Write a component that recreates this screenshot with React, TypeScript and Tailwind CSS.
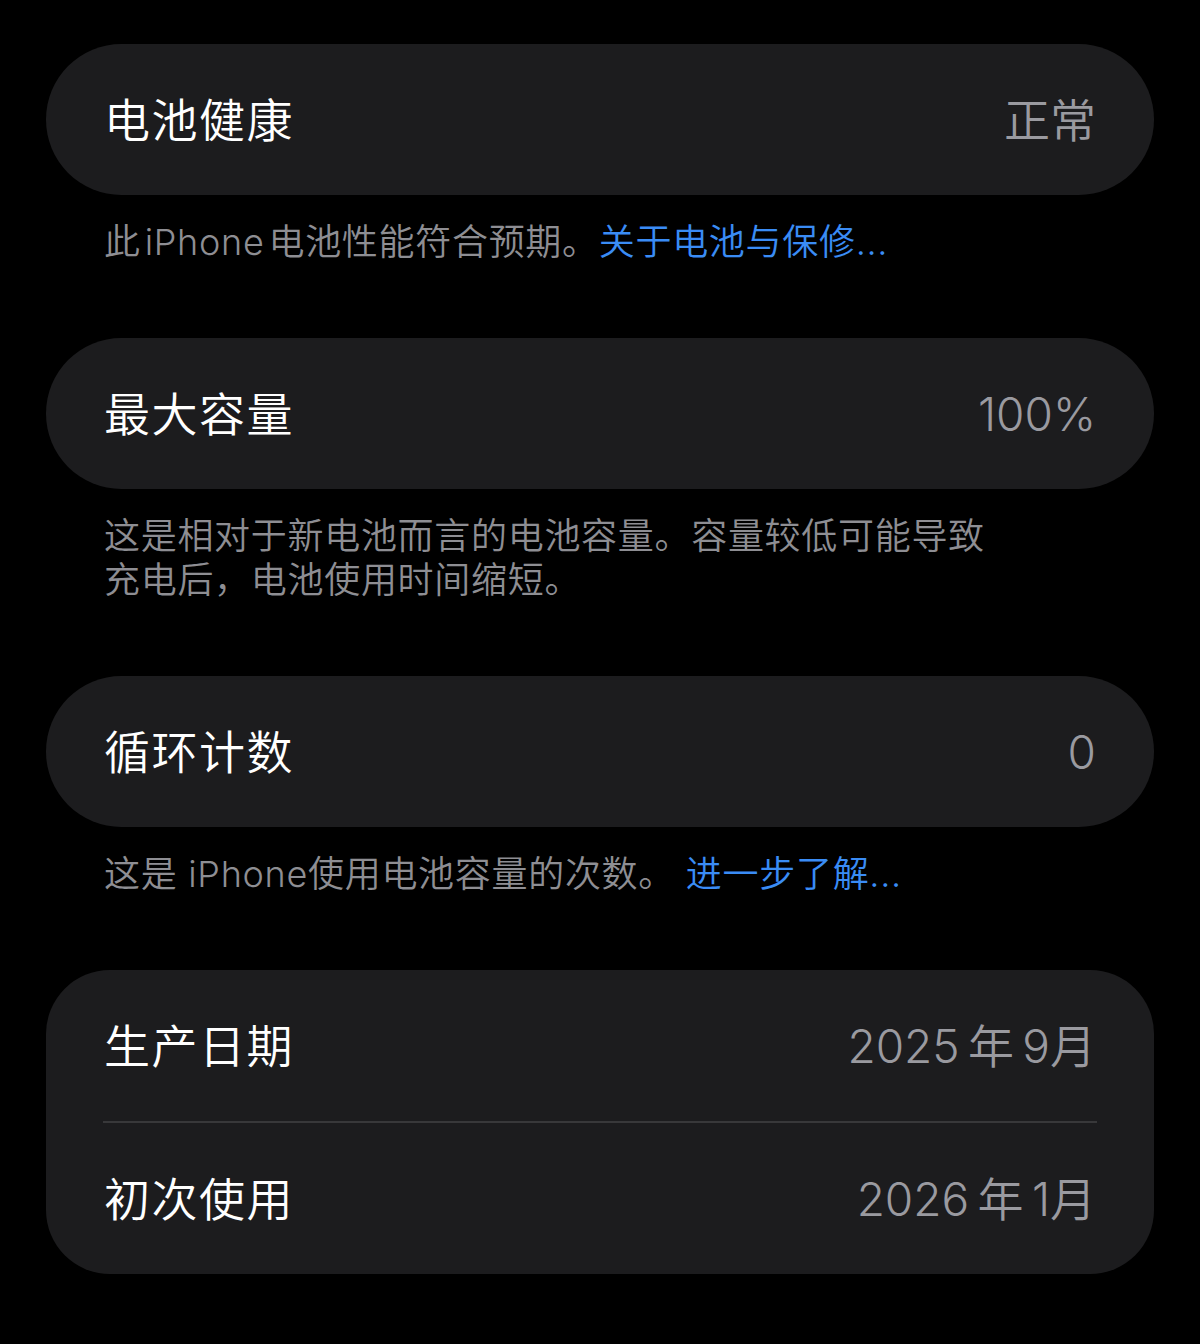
import React from "react";

const font = { fontFamily: '"Inter", "Noto Sans CJK SC", sans-serif' };

function Row({ label, value }: { label: string; value: string }) {
  return (
    <div className="flex h-[151px] items-center justify-between px-[58px]">
      <span className="text-[46px] font-[350] leading-none tracking-[1.5px] text-white">{label}</span>
      <span className="text-[46px] font-[350] leading-none text-[#9a9aa0]">{value}</span>
    </div>
  );
}

function Caption({ children }: { children: React.ReactNode }) {
  return (
    <p className="px-[58px] pb-[74px] pt-[25px] text-[36px] font-[350] leading-[44px] tracking-[0.7px] text-[#8e8e93]">
      {children}
    </p>
  );
}

function Link({ children }: { children: React.ReactNode }) {
  return <span className="text-[#3a8cf5]">{children}</span>;
}

export default function App() {
  return (
    <div className="min-h-[1344px] bg-black px-[46px] pt-[44px]" style={font}>
      <div className="rounded-[76px] bg-[#1c1c1e]">
        <Row label="电池健康" value="正常" />
      </div>
      <Caption>
        此&#8202;iPhone&#8202;电池性能符合预期。<Link>关于电池与保修...</Link>
      </Caption>

      <div className="rounded-[76px] bg-[#1c1c1e]">
        <Row label="最大容量" value="100%" />
      </div>
      <Caption>
        这是相对于新电池而言的电池容量。容量较低可能导致
        <br />
        充电后，电池使用时间缩短。
      </Caption>

      <div className="rounded-[76px] bg-[#1c1c1e]">
        <Row label="循环计数" value="0" />
      </div>
      <Caption>
        这是 iPhone使用电池容量的次数。 <Link>进一步了解...</Link>
      </Caption>

      <div className="rounded-[64px] bg-[#1c1c1e]">
        <Row label="生产日期" value={"2025\u2009年\u20099月"} />
        <div className="mx-[57px] h-[2px] bg-[#38383a]" />
        <Row label="初次使用" value={"2026\u2009年\u20091月"} />
      </div>
    </div>
  );
}
